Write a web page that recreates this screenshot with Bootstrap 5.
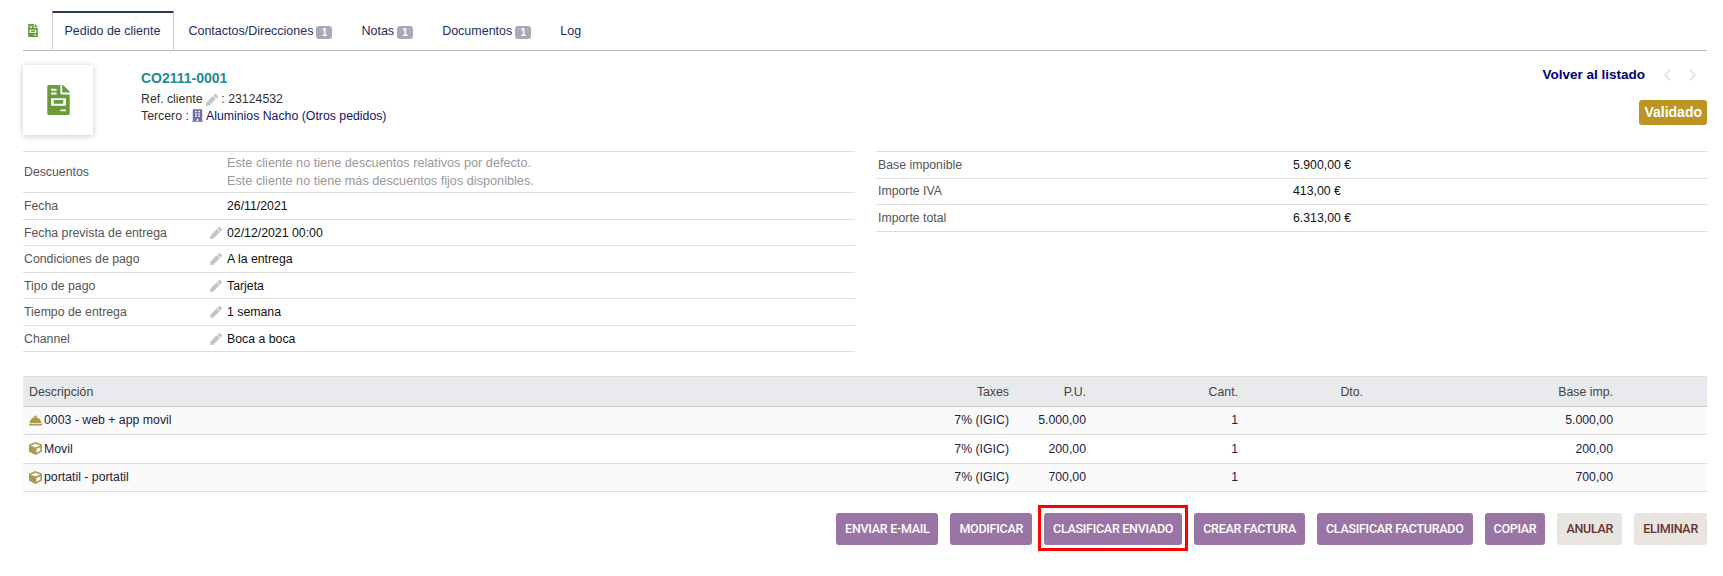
<!DOCTYPE html>
<html lang="es">
<head>
    <meta charset="UTF-8">
    <meta name="viewport" content="width=device-width, initial-scale=1">
    <title>Pedido de cliente</title>
    <link href="https://cdn.jsdelivr.net/npm/bootstrap@5.3.0/dist/css/bootstrap.min.css" rel="stylesheet">
    <style>
        body { font-family: "Liberation Sans", Arial, sans-serif; font-size: 12.3px; color: #222; background: #fff; min-height: 100vh; }
        a { color: #14146e; text-decoration: none; }
        .page-wrap { padding: 11px 16px 31px 23px; }

        .tab-bar { height: 40px; border-bottom: 1px solid #bbb; flex-wrap: nowrap; align-items: stretch; }
        .tab-bar .tab-icon { width: 29px; padding-left: 5px; display: flex; align-items: center; }
        .tab-bar .nav-link { color: #1f2d5c; font-size: 12.5px; padding: 0 13.5px; margin: 0 0 -1px 0; border: 1px solid transparent; border-top-width: 2px; border-radius: 0; background: none; line-height: 36px; white-space: nowrap; }
        .tab-bar .nav-link.active { color: #1f2d5c; background: #fff; padding: 0 12.5px 0 11.5px; border-color: #2b3a55 #ccc #fff #ccc; }
        .tab-count { display: inline-block; background: #a9a9b8; color: #fff; font-size: 10px; font-weight: 700; border-radius: 3px; width: 16px; height: 13px; line-height: 13px; text-align: center; margin-left: 3px; vertical-align: -1px; }

        .ref-head { height: 100px; padding-top: 14px; }
        .photo-box { width: 70px; height: 70px; box-shadow: 0 1px 6px rgba(0, 0, 0, .22); margin-right: 48px; }
        .ref-code { font-size: 14px; font-weight: 700; color: #1f8a94; line-height: 18px; margin-top: 4px; margin-bottom: 4px; }
        .ref-line { line-height: 17px; color: #333; }
        .top-right { padding-right: 10px; }
        .back-link { font-size: 13.5px; font-weight: 700; color: #000078; }
        .status-pill { background: #bc9526; color: #fff; font-size: 14px; font-weight: 700; border-radius: 3px; padding: 0 5px; line-height: 25px; margin-top: 15px; margin-right: -10px; }
        .pager-chev { margin-left: 18px; }

        .info-side { width: 832px; }
        .info-side-r { width: 831px; }
        .info-grid { margin: 0; border-top: 1px solid #ddd; font-size: 12.3px; }
        .info-grid td { padding: 0; border-bottom: 1px solid #ddd; color: #111; vertical-align: middle; }
        .info-grid .lbl { color: #555; padding-left: 1px; }
        .info-grid .lbl-r { color: #555; padding-left: 2px; width: 417px; }
        .info-grid .h-26 { height: 26.5px; }
        .info-grid .h-27 { height: 26.7px; }
        .info-grid .muted-note { color: #999; font-size: 12.7px; line-height: 18px; padding: 2px 0; }
        .edit-row td { padding-top: 1px; }
        .pencil-cell { width: 204px; }
        .edit-lbl { padding-right: 5px; }

        .lines-grid { margin: 24px 0 0 0; font-size: 12.3px; }
        .lines-grid th { background: #e9eaed; color: #444; font-weight: 400; height: 30px; padding: 1px 6px 0; border-top: 1px solid #ddd; border-bottom: 1px solid #ccc; vertical-align: middle; }
        .lines-grid td { height: 28.4px; padding: 0 6px; border-bottom: 1px solid #ddd; vertical-align: middle; color: #1c2340; }
        .lines-grid tbody tr:nth-child(odd) td { background: #fafafa; }
        .lines-grid a { color: #1c2340; }
        .w-taxes { width: 140px; }
        .w-pu { width: 77px; }
        .w-cant { width: 152px; }
        .w-dto { width: 125px; }
        .w-base { width: 250px; }
        .w-rest { width: 88px; }
        .ic-prod { width: 13px; height: 13px; fill: #a89a50; vertical-align: -2.5px; margin-right: 2px; }

        .actions-row { margin-top: 21px; gap: 12px; }
        .act-btn { font-family: Roboto, sans-serif; font-size: 12.5px; letter-spacing: -.27px; font-weight: 500; text-transform: uppercase; height: 32px; line-height: 32px; padding: 0 9px; border: 0; border-radius: 3px; color: #fff; background: #9b74a6; white-space: nowrap; }
        .act-btn:hover { color: #fff; background: #9b74a6; }
        .act-btn.soft { background: #e8e4df; color: #633; }
        .act-btn.soft:hover { background: #e8e4df; color: #633; }
        .picked-ring { border: 3px solid #f00; padding: 5px 3px 3px 3px; margin: -8px -6px -6px -6px; display: flex; }

        .ic-pencil { width: 12px; height: 12px; fill: #c4c4c4; }
        .ic-build { width: 11px; height: 13px; fill: #6f6fa8; vertical-align: -2px; }
    </style>
</head>
<body>
<svg width="0" height="0" class="d-block">
    <symbol id="i-file" viewBox="0 0 384 512"><path d="M377 105L279.1 7c-4.5-4.5-10.6-7-17-7H256v128h128v-6.1c0-6.3-2.5-12.4-7-16.9zm-153 31V0H24C10.7 0 0 10.7 0 24v464c0 13.3 10.7 24 24 24h336c13.3 0 24-10.7 24-24V160H248c-13.2 0-24-10.8-24-24zM64 72c0-4.42 3.58-8 8-8h80c4.42 0 8 3.58 8 8v16c0 4.42-3.58 8-8 8H72c-4.42 0-8-3.58-8-8V72zm0 64c0-4.42 3.58-8 8-8h80c4.42 0 8 3.58 8 8v16c0 4.42-3.58 8-8 8H72c-4.42 0-8-3.58-8-8v-16zm256 304c0 4.42-3.58 8-8 8h-80c-4.42 0-8-3.58-8-8v-16c0-4.42 3.58-8 8-8h80c4.42 0 8 3.58 8 8v16zm0-200v96c0 8.84-7.16 16-16 16H80c-8.84 0-16-7.16-16-16v-96c0-8.84 7.16-16 16-16h224c8.84 0 16 7.16 16 16zm-48 16H112v64h160v-64z"/></symbol>
    <symbol id="i-pencil" viewBox="0 0 512 512"><path d="M497.9 142.1l-46.1 46.1c-4.7 4.7-12.3 4.7-17 0l-111-111c-4.7-4.7-4.7-12.3 0-17l46.1-46.1c18.7-18.7 49.1-18.7 67.9 0l60.1 60.1c18.8 18.7 18.8 49.1 0 67.9zM284.2 99.8L21.6 362.4.4 483.9c-2.9 16.4 11.4 30.6 27.8 27.8l121.5-21.3 262.6-262.6c4.7-4.7 4.7-12.3 0-17l-111-111c-4.8-4.7-12.4-4.7-17.1 0z"/></symbol>
    <symbol id="i-building" viewBox="0 0 448 512"><path d="M436 480h-20V24c0-13.255-10.745-24-24-24H56C42.745 0 32 10.745 32 24v456H12c-6.627 0-12 5.373-12 12v20h448v-20c0-6.627-5.373-12-12-12zM128 76c0-6.627 5.373-12 12-12h40c6.627 0 12 5.373 12 12v40c0 6.627-5.373 12-12 12h-40c-6.627 0-12-5.373-12-12V76zm0 96c0-6.627 5.373-12 12-12h40c6.627 0 12 5.373 12 12v40c0 6.627-5.373 12-12 12h-40c-6.627 0-12-5.373-12-12v-40zm52 148h-40c-6.627 0-12-5.373-12-12v-40c0-6.627 5.373-12 12-12h40c6.627 0 12 5.373 12 12v40c0 6.627-5.373 12-12 12zm76 160h-64v-84c0-6.627 5.373-12 12-12h40c6.627 0 12 5.373 12 12v84zm64-172c0 6.627-5.373 12-12 12h-40c-6.627 0-12-5.373-12-12v-40c0-6.627 5.373-12 12-12h40c6.627 0 12 5.373 12 12v40zm0-96c0 6.627-5.373 12-12 12h-40c-6.627 0-12-5.373-12-12v-40c0-6.627 5.373-12 12-12h40c6.627 0 12 5.373 12 12v40zm0-96c0 6.627-5.373 12-12 12h-40c-6.627 0-12-5.373-12-12V76c0-6.627 5.373-12 12-12h40c6.627 0 12 5.373 12 12v40z"/></symbol>
    <symbol id="i-cube" viewBox="0 0 512 512"><path d="M239.1 6.3l-208 78c-18.7 7-31.1 25-31.1 45v225.1c0 18.2 10.3 34.8 26.5 42.9l208 104c13.5 6.8 29.4 6.8 42.9 0l208-104c16.3-8.1 26.5-24.8 26.5-42.9V129.3c0-20-12.4-37.9-31.1-44.9l-208-78C262 2.2 250 2.2 239.1 6.3zM256 68.4l192 72v1.1l-192 78-192-78v-1.1l192-72zm32 356V275.5l160-65v133.9l-160 80z"/></symbol>
    <symbol id="i-bell" viewBox="0 0 512 512"><path d="M288 130.54V112h16c8.84 0 16-7.16 16-16V80c0-8.84-7.16-16-16-16h-96c-8.84 0-16 7.16-16 16v16c0 8.84 7.16 16 16 16h16v18.54C115.49 146.11 32 239.18 32 352h448c0-112.82-83.49-205.89-192-221.46zM496 384H16c-8.84 0-16 7.16-16 16v32c0 8.84 7.16 16 16 16h480c8.84 0 16-7.16 16-16v-32c0-8.84-7.16-16-16-16z"/></symbol>
</svg>

<div class="page-wrap">
    <ul class="nav nav-tabs tab-bar">
        <li class="tab-icon"><svg width="10" height="13" fill="#6b9a3c"><use href="#i-file"/></svg></li>
        <li class="nav-item"><a class="nav-link active" href="#">Pedido de cliente</a></li>
        <li class="nav-item"><a class="nav-link" href="#">Contactos/Direcciones<span class="tab-count">1</span></a></li>
        <li class="nav-item"><a class="nav-link" href="#">Notas<span class="tab-count">1</span></a></li>
        <li class="nav-item"><a class="nav-link" href="#">Documentos<span class="tab-count">1</span></a></li>
        <li class="nav-item"><a class="nav-link" href="#">Log</a></li>
    </ul>

    <div class="d-flex ref-head">
        <div class="photo-box d-flex align-items-center justify-content-center">
            <svg width="23" height="30" fill="#6b9a3c"><use href="#i-file"/></svg>
        </div>
        <div class="flex-grow-1">
            <div class="ref-code">CO2111-0001</div>
            <div class="ref-line">Ref. cliente <svg class="ic-pencil"><use href="#i-pencil"/></svg> : 23124532</div>
            <div class="ref-line">Tercero : <svg class="ic-build"><use href="#i-building"/></svg> <a href="#">Aluminios Nacho</a> <a href="#">(Otros pedidos)</a></div>
        </div>
        <div class="d-flex flex-column align-items-end top-right">
            <div class="d-flex align-items-center">
                <a class="back-link" href="#">Volver al listado</a>
                <svg class="pager-chev" width="8" height="12" fill="none" stroke="#e4e4e4" stroke-width="2"><polyline points="7,1 2,6 7,11"/></svg>
                <svg class="pager-chev" width="8" height="12" fill="none" stroke="#e4e4e4" stroke-width="2"><polyline points="1,1 6,6 1,11"/></svg>
            </div>
            <span class="status-pill">Validado</span>
        </div>
    </div>

    <div class="d-flex justify-content-between">
        <div class="info-side">
            <table class="table table-borderless info-grid">
                <tbody>
                    <tr><td class="lbl pencil-cell">Descuentos</td><td class="muted-note">Este cliente no tiene descuentos relativos por defecto.<br>Este cliente no tiene más descuentos fijos disponibles.</td></tr>
                    <tr><td class="lbl h-26">Fecha</td><td>26/11/2021</td></tr>
                    <tr class="edit-row"><td class="lbl h-26"><div class="d-flex justify-content-between align-items-center edit-lbl">Fecha prevista de entrega<svg class="ic-pencil"><use href="#i-pencil"/></svg></div></td><td>02/12/2021 00:00</td></tr>
                    <tr class="edit-row"><td class="lbl h-26"><div class="d-flex justify-content-between align-items-center edit-lbl">Condiciones de pago<svg class="ic-pencil"><use href="#i-pencil"/></svg></div></td><td>A la entrega</td></tr>
                    <tr class="edit-row"><td class="lbl h-26"><div class="d-flex justify-content-between align-items-center edit-lbl">Tipo de pago<svg class="ic-pencil"><use href="#i-pencil"/></svg></div></td><td>Tarjeta</td></tr>
                    <tr class="edit-row"><td class="lbl h-26"><div class="d-flex justify-content-between align-items-center edit-lbl">Tiempo de entrega<svg class="ic-pencil"><use href="#i-pencil"/></svg></div></td><td>1 semana</td></tr>
                    <tr class="edit-row"><td class="lbl h-26"><div class="d-flex justify-content-between align-items-center edit-lbl">Channel<svg class="ic-pencil"><use href="#i-pencil"/></svg></div></td><td>Boca a boca</td></tr>
                </tbody>
            </table>
        </div>
        <div class="info-side-r">
            <table class="table table-borderless info-grid">
                <tbody>
                    <tr><td class="lbl-r h-27">Base imponible</td><td>5.900,00 €</td></tr>
                    <tr><td class="lbl-r h-27">Importe IVA</td><td>413,00 €</td></tr>
                    <tr><td class="lbl-r h-27">Importe total</td><td>6.313,00 €</td></tr>
                </tbody>
            </table>
        </div>
    </div>

    <table class="table table-borderless lines-grid">
        <thead>
            <tr>
                <th>Descripción</th>
                <th class="text-end w-taxes">Taxes</th>
                <th class="text-end w-pu">P.U.</th>
                <th class="text-end w-cant">Cant.</th>
                <th class="text-end w-dto">Dto.</th>
                <th class="text-end w-base">Base imp.</th>
                <th class="w-rest"></th>
            </tr>
        </thead>
        <tbody>
            <tr><td><svg class="ic-prod"><use href="#i-bell"/></svg><a href="#">0003</a> - web + app movil</td><td class="text-end">7% (IGIC)</td><td class="text-end">5.000,00</td><td class="text-end">1</td><td></td><td class="text-end">5.000,00</td><td></td></tr>
            <tr><td><svg class="ic-prod"><use href="#i-cube"/></svg><a href="#">Movil</a></td><td class="text-end">7% (IGIC)</td><td class="text-end">200,00</td><td class="text-end">1</td><td></td><td class="text-end">200,00</td><td></td></tr>
            <tr><td><svg class="ic-prod"><use href="#i-cube"/></svg><a href="#">portatil</a> - portatil</td><td class="text-end">7% (IGIC)</td><td class="text-end">700,00</td><td class="text-end">1</td><td></td><td class="text-end">700,00</td><td></td></tr>
        </tbody>
    </table>

    <div class="d-flex justify-content-end actions-row">
        <a class="btn act-btn" href="#">Enviar e-mail</a>
        <a class="btn act-btn" href="#">Modificar</a>
        <div class="picked-ring"><a class="btn act-btn" href="#">Clasificar enviado</a></div>
        <a class="btn act-btn" href="#">Crear factura</a>
        <a class="btn act-btn" href="#">Clasificar facturado</a>
        <a class="btn act-btn" href="#">Copiar</a>
        <a class="btn act-btn soft" href="#">Anular</a>
        <a class="btn act-btn soft" href="#">Eliminar</a>
    </div>
</div>
<script src="https://cdn.jsdelivr.net/npm/bootstrap@5.3.0/dist/js/bootstrap.bundle.min.js"></script>
</body>
</html>
